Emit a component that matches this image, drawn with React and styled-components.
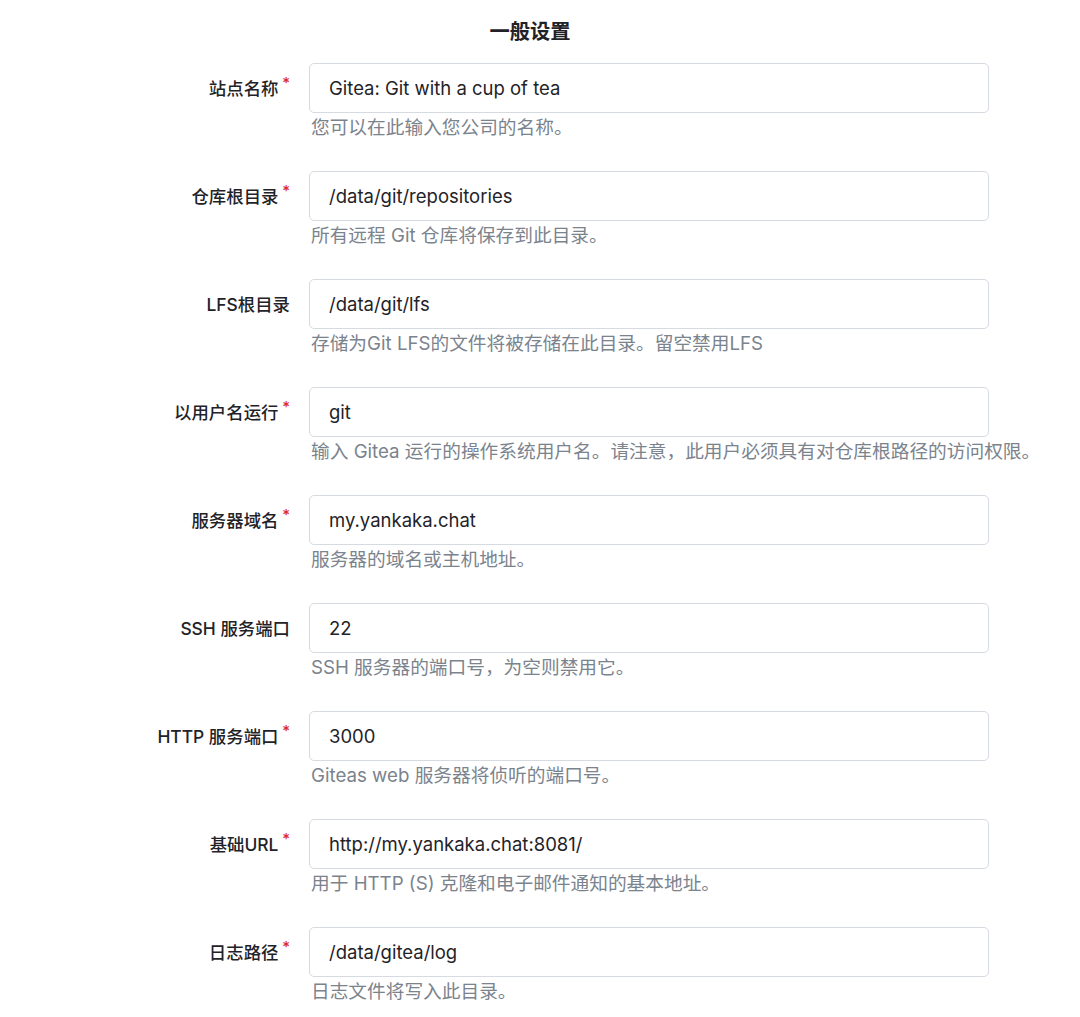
import styled, { createGlobalStyle } from "styled-components";

const GlobalStyle = createGlobalStyle`
  body {
    margin: 0;
    background: #ffffff;
    font-family: "Inter", "Noto Sans CJK SC", sans-serif;
  }
`;

const Page = styled.div`
  width: 1080px;
  min-height: 1017px;
`;

const Title = styled.h3`
  width: 1060px;
  margin: 0;
  height: 63px;
  line-height: 63px;
  text-align: center;
  font-size: 20.3px;
  font-weight: 700;
  color: #1f2328;
`;

const Form = styled.div`
  display: flex;
  flex-direction: column;
`;

const Field = styled.div`
  display: grid;
  grid-template-columns: 290px 680px;
  column-gap: 19px;
  margin-bottom: 31px;
`;

const Label = styled.label`
  height: 48px;
  display: flex;
  align-items: center;
  justify-content: flex-end;
  font-size: 17.4px;
  font-weight: 500;
  color: #1f2328;
  white-space: nowrap;
  ${(p) =>
    p.$required &&
    `
    &::after {
      content: "*";
      color: #db2828;
      font-size: 15px;
      margin: -0.6em 0 0 0.25em;
    }
  `}
`;

const Control = styled.div`
  display: flex;
  flex-direction: column;
`;

const Input = styled.input`
  box-sizing: border-box;
  width: 680px;
  height: 50px;
  padding: 0 19px;
  border: 1px solid #d6dbe1;
  border-radius: 5px;
  font-family: inherit;
  font-size: 18.5px;
  color: #1f2328;
  background: #ffffff;
  outline: none;
`;

const Help = styled.span`
  margin-top: 3px;
  padding-left: 2px;
  line-height: 24px;
  font-size: 18.7px;
  color: #7b838d;
  white-space: nowrap;
`;

const fields = [
  { label: "站点名称", required: true, value: "Gitea: Git with a cup of tea", help: "您可以在此输入您公司的名称。" },
  { label: "仓库根目录", required: true, value: "/data/git/repositories", help: "所有远程 Git 仓库将保存到此目录。" },
  { label: "LFS根目录", required: false, value: "/data/git/lfs", help: "存储为Git LFS的文件将被存储在此目录。留空禁用LFS" },
  { label: "以用户名运行", required: true, value: "git", help: "输入 Gitea 运行的操作系统用户名。请注意，此用户必须具有对仓库根路径的访问权限。" },
  { label: "服务器域名", required: true, value: "my.yankaka.chat", help: "服务器的域名或主机地址。" },
  { label: "SSH 服务端口", required: false, value: "22", help: "SSH 服务器的端口号，为空则禁用它。" },
  { label: "HTTP 服务端口", required: true, value: "3000", help: "Giteas web 服务器将侦听的端口号。" },
  { label: "基础URL", required: true, value: "http://my.yankaka.chat:8081/", help: "用于 HTTP (S) 克隆和电子邮件通知的基本地址。" },
  { label: "日志路径", required: true, value: "/data/gitea/log", help: "日志文件将写入此目录。" },
];

export default function App() {
  return (
    <Page>
      <GlobalStyle />
      <Title>一般设置</Title>
      <Form>
        {fields.map((f) => (
          <Field key={f.label}>
            <Label $required={f.required}>{f.label}</Label>
            <Control>
              <Input defaultValue={f.value} />
              <Help>{f.help}</Help>
            </Control>
          </Field>
        ))}
      </Form>
    </Page>
  );
}
